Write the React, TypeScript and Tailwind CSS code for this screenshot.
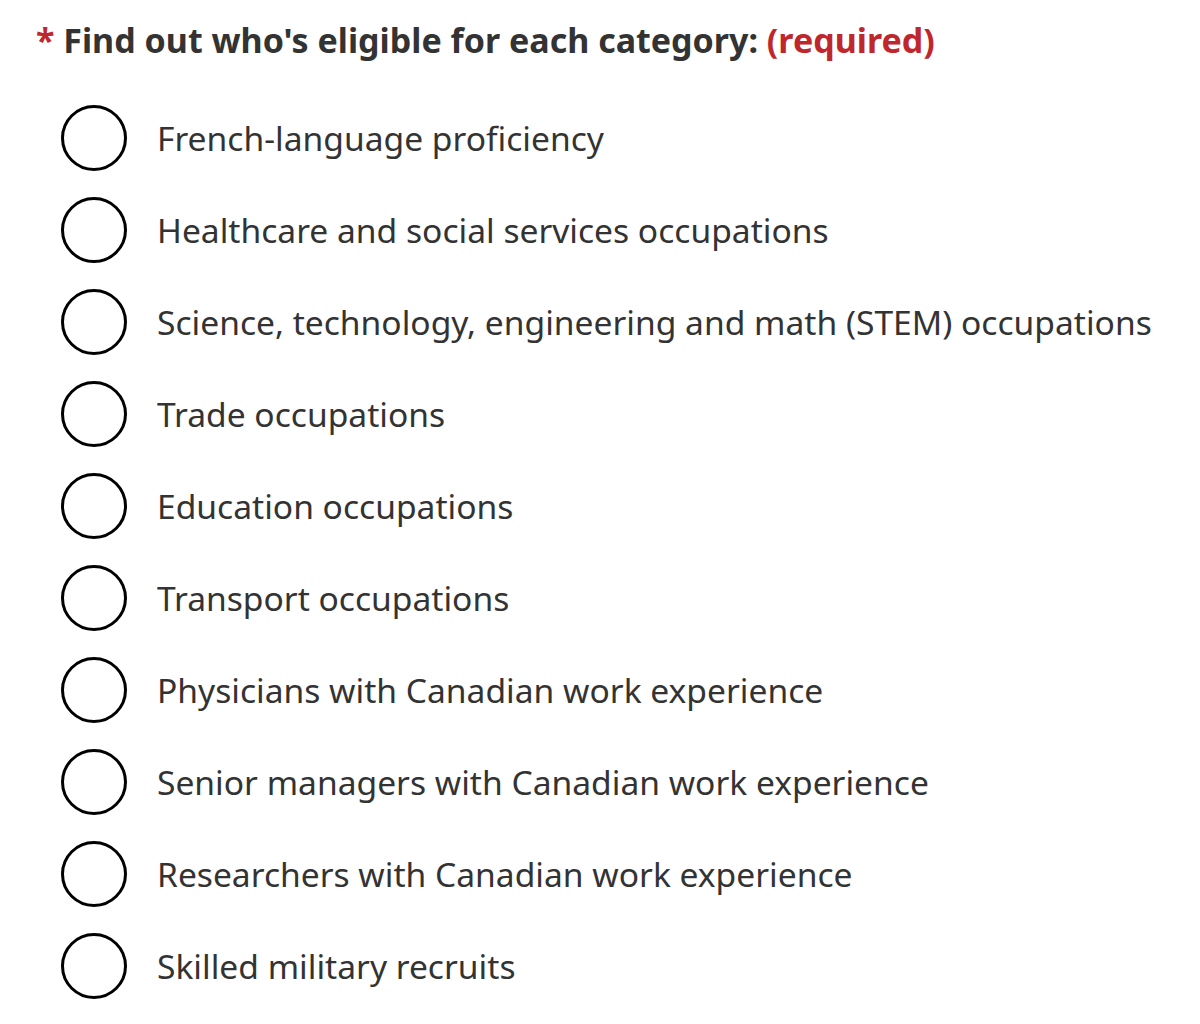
const options = [
  'French-language proficiency',
  'Healthcare and social services occupations',
  'Science, technology, engineering and math (STEM) occupations',
  'Trade occupations',
  'Education occupations',
  'Transport occupations',
  'Physicians with Canadian work experience',
  'Senior managers with Canadian work experience',
  'Researchers with Canadian work experience',
  'Skilled military recruits',
]

export default function App() {
  return (
    <div className="min-h-screen bg-white text-[#333333] font-['Noto_Sans',sans-serif]">
      <div className="pl-[36px] pt-[17px]">
        <div className="text-[34px] leading-[46px] font-bold whitespace-nowrap">
          <span className="text-[#c0272d]">*</span> Find out who's eligible for each category:{' '}
          <span className="text-[#c0272d]">(required)</span>
        </div>
        <div className="mt-[42px] flex flex-col gap-[26px] pl-[25px]">
          {options.map((label) => (
            <label key={label} className="flex items-center h-[66px]">
              <span className="w-[66px] h-[66px] rounded-full border-[3px] border-black shrink-0" />
              <span className="ml-[30px] text-[33.6px] leading-[40px] whitespace-nowrap">{label}</span>
            </label>
          ))}
        </div>
      </div>
    </div>
  )
}
